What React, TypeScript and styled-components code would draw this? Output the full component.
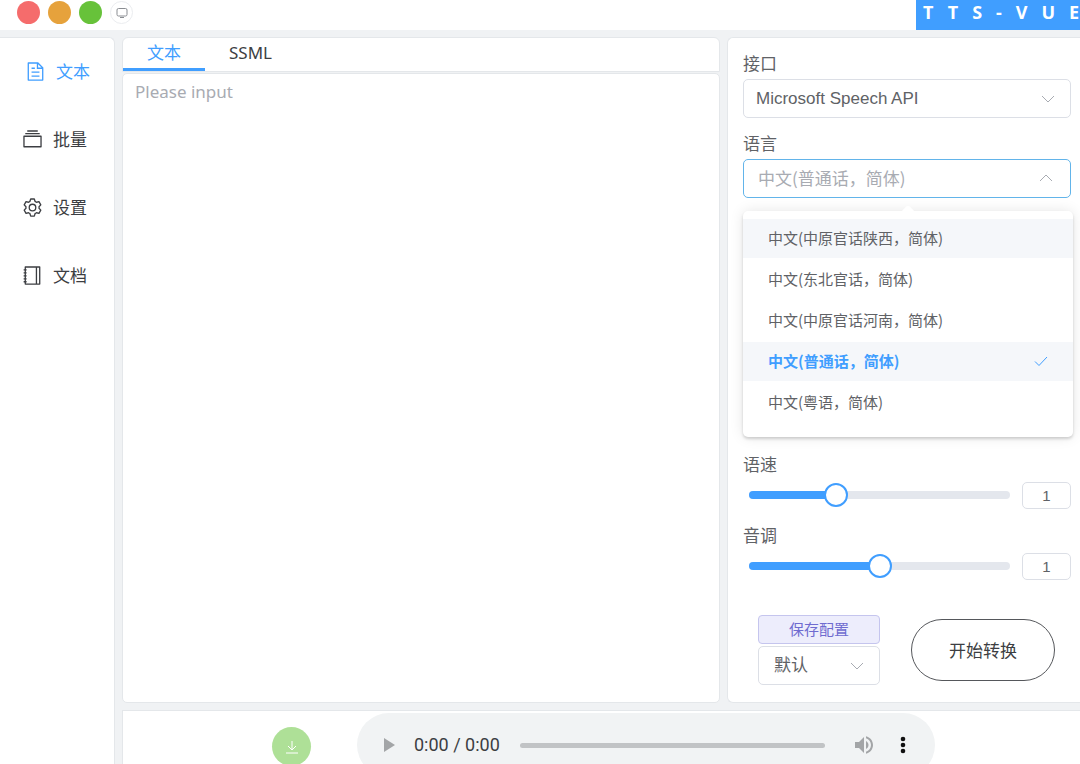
import React, { useState } from "react";
import styled, { createGlobalStyle, css } from "styled-components";

const sans = `"Noto Sans", "Noto Sans CJK SC", sans-serif`;
const cjk = `"Noto Sans CJK SC", sans-serif`;
const arial = `"Liberation Sans", "Noto Sans CJK SC", sans-serif`;

const color = {
  primary: "#409eff",
  text: "#3c3e42",
  regular: "#606266",
  placeholder: "#a8abb2",
  border: "#dcdfe6",
  focus: "#62b4ea",
  panelBorder: "#e4e7ea",
  page: "#f0f2f4",
};

const GlobalStyle = createGlobalStyle`
  *, *::before, *::after { box-sizing: border-box; }
  body { margin: 0; background: ${color.page}; overflow: hidden; }
  button, input, select, textarea { font: inherit; color: inherit; margin: 0; }
  button { cursor: pointer; }
`;

const Shell = styled.div`
  display: flex;
  flex-direction: column;
  height: 100vh;
  font-family: ${cjk};
  font-size: 17px;
  line-height: 24px;
  color: ${color.text};
`;

const Header = styled.header`
  display: flex;
  justify-content: space-between;
  flex: 0 0 30px;
  background: #fff;
`;

const WindowButtons = styled.div`
  display: flex;
  gap: 8px;
  padding-left: 17px;
`;

const WindowButton = styled.button<{ $fill: string; $outlined?: boolean }>`
  display: flex;
  align-items: center;
  justify-content: center;
  width: 23px;
  height: 23px;
  margin-top: 1px;
  padding: 0;
  border: ${(p) => (p.$outlined ? "1px solid #ebedf0" : "0")};
  border-radius: 50%;
  background: ${(p) => p.$fill};
  color: #8a8d92;
`;

const Brand = styled.div`
  flex: 0 0 164px;
  width: 164px;
  padding-left: 7px;
  background: ${color.primary};
  color: #fff;
  font-family: ${sans};
  font-size: 18px;
  font-weight: 700;
  letter-spacing: 14px;
  white-space: nowrap;
`;

const Body = styled.div`
  display: flex;
  flex: 1;
  gap: 7px;
  min-height: 0;
  padding-top: 7px;
`;

const Sidebar = styled.nav`
  flex: 0 0 115px;
  background: #fff;
  border: 1px solid ${color.panelBorder};
  border-width: 1px 1px 0 0;
  border-radius: 0 6px 0 0;
`;

const NavItem = styled.a<{ $active?: boolean }>`
  display: flex;
  align-items: center;
  gap: 10px;
  height: 68px;
  padding-bottom: 2px;
  padding-left: ${(p) => (p.$active ? 25 : 22)}px;
  color: ${(p) => (p.$active ? color.primary : color.text)};
  text-decoration: none;
`;

const Content = styled.div`
  display: flex;
  flex: 1;
  flex-direction: column;
  gap: 7px;
  min-width: 0;
`;

const Workspace = styled.main`
  display: flex;
  flex: 1;
  gap: 7px;
  min-height: 0;
`;

const Editor = styled.section`
  display: flex;
  flex: 1;
  flex-direction: column;
  gap: 1px;
  min-width: 0;
`;

const Tabs = styled.div`
  display: flex;
  flex: 0 0 35px;
  background: #fff;
  border: 1px solid ${color.panelBorder};
  border-radius: 6px 6px 0 0;
`;

const Tab = styled.button<{ $active?: boolean }>`
  padding: 0 24px;
  border: 0;
  border-bottom: 3px solid ${(p) => (p.$active ? color.primary : "transparent")};
  background: none;
  color: ${(p) => (p.$active ? color.primary : color.text)};
  font-family: ${sans};
`;

const TextBox = styled.textarea`
  flex: 1;
  width: 100%;
  padding: 6px 12px;
  border: 1px solid ${color.panelBorder};
  border-radius: 5px;
  background: #fff;
  font-family: ${sans};
  resize: none;
  outline: none;
  &::placeholder { color: ${color.placeholder}; }
`;

const Options = styled.aside`
  flex: 0 0 353px;
  padding: 13px 9px 0 15px;
  background: #fff;
  border: 1px solid ${color.panelBorder};
  border-right: 0;
  border-radius: 6px 0 0 6px;
`;

const Field = styled.div<{ $below?: number }>`
  display: flex;
  flex-direction: column;
  gap: 4px;
  position: relative;
  margin-bottom: ${(p) => p.$below ?? 13}px;
`;

const Label = styled.label`
  align-self: flex-start;
  color: ${color.regular};
`;

const boxStyle = css`
  width: 100%;
  height: 39px;
  border: 1px solid ${color.border};
  border-radius: 5px;
  background: #fff;
  color: ${color.regular};
`;

const SelectWrap = styled.div`
  display: grid;
  align-items: center;
  & > * { grid-area: 1 / 1; }
  & > svg {
    justify-self: end;
    margin-right: 16px;
    pointer-events: none;
  }
`;

const Select = styled.select<{ $inset?: number }>`
  ${boxStyle}
  appearance: none;
  padding: 0 ${(p) => p.$inset ?? 12}px;
  font-family: ${arial};
`;

const Combo = styled.button`
  ${boxStyle}
  display: flex;
  align-items: center;
  justify-content: space-between;
  padding: 0 17px 2px 14px;
  border: 1px solid ${color.focus};
  color: ${color.placeholder};
`;

const Menu = styled.ul`
  position: absolute;
  z-index: 2;
  top: calc(100% + 13px);
  left: 0;
  right: -2px;
  height: 226px;
  margin: 0;
  padding: 8px 0;
  list-style: none;
  background: #fff;
  border-radius: 5px;
  box-shadow: 0 2px 3px rgba(0, 0, 0, 0.16), 0 0 14px rgba(0, 0, 0, 0.1);
  &::before {
    content: "";
    position: absolute;
    top: -4px;
    left: 50%;
    width: 10px;
    height: 10px;
    margin-left: -5px;
    background: #fff;
    border-radius: 2px;
    transform: rotate(45deg);
  }
`;

const MenuItem = styled.li<{ $shaded?: boolean; $selected?: boolean }>`
  display: flex;
  align-items: center;
  justify-content: space-between;
  position: relative;
  height: 39px;
  margin-bottom: 2px;
  padding: 0 25px 2px;
  background: ${(p) => (p.$shaded ? "#f5f7fa" : "#fff")};
  color: ${(p) => (p.$selected ? color.primary : color.regular)};
  font-size: 15px;
  font-weight: ${(p) => (p.$selected ? 700 : 400)};
  cursor: pointer;
`;

const SliderRow = styled.div`
  display: flex;
  align-items: center;
  gap: 12px;
  height: 30px;
  padding-left: 6px;
`;

const Slider = styled.div`
  display: grid;
  flex: 1;
  align-items: center;
  & > * { grid-area: 1 / 1; }
`;

const Rail = styled.div`
  height: 8px;
  border-radius: 4px;
  background: #e4e7ed;
`;

const Fill = styled.div`
  height: 100%;
  border-radius: 4px;
  background: ${color.primary};
`;

const Range = styled.input`
  appearance: none;
  height: 24px;
  margin: 0 -12px;
  background: transparent;
  &::-webkit-slider-thumb {
    appearance: none;
    width: 24px;
    height: 24px;
    border: 2px solid ${color.primary};
    border-radius: 50%;
    background: #fff;
  }
`;

const NumberBox = styled.input`
  width: 49px;
  height: 27px;
  border: 1px solid ${color.border};
  border-radius: 5px;
  color: ${color.regular};
  font-family: ${arial};
  font-size: 15px;
  text-align: center;
`;

const Actions = styled.div`
  display: flex;
  align-items: center;
  gap: 31px;
  padding: 21px 0 0 15px;
`;

const Config = styled.div`
  display: flex;
  flex: 0 0 122px;
  flex-direction: column;
  gap: 2px;
`;

const SaveButton = styled.button`
  height: 29px;
  padding: 0 0 2px;
  border: 1px solid #c5c5ee;
  border-radius: 4px;
  background: #ededfc;
  color: #6f6bd0;
  font-size: 15px;
`;

const StartButton = styled.button`
  width: 144px;
  height: 62px;
  border: 1px solid #55575b;
  border-radius: 31px;
  background: #fff;
`;

const Footer = styled.footer`
  display: flex;
  align-items: flex-start;
  justify-content: center;
  gap: 46px;
  flex: 0 0 54px;
  padding: 2px 0 0 4px;
  overflow: hidden;
  background: #fff;
  border: 1px solid ${color.panelBorder};
  border-width: 1px 0 0 1px;
`;

const Download = styled.button`
  display: flex;
  align-items: center;
  justify-content: center;
  flex: 0 0 39px;
  height: 39px;
  margin-top: 14px;
  padding: 0;
  border: 0;
  border-radius: 50%;
  background: #aee097;
  color: #fff;
`;

const Player = styled.div`
  display: flex;
  align-items: center;
  flex: 0 1 578px;
  height: 64px;
  padding: 0 20px;
  border-radius: 32px;
  background: #f1f3f4;
  font-family: Roboto, sans-serif;
`;

const PlayerButton = styled.button<{ $tone: string }>`
  display: flex;
  align-items: center;
  justify-content: center;
  width: 24px;
  height: 24px;
  padding: 0;
  border: 0;
  background: none;
  color: ${(p) => p.$tone};
`;

const Time = styled.span`
  margin: 0 20px 0 13px;
  font-size: 18px;
`;

const Progress = styled.div`
  flex: 1;
  height: 5px;
  margin-right: 27px;
  border-radius: 3px;
  background: #c1c3c5;
`;

const Volume = styled(PlayerButton)`
  margin-right: 15px;
`;

const navIcons = {
  document:
    "M832 384H576V128H192v768h640V384zm-26.496-64L640 154.496V320h165.504zM160 64h480l256 256v608a32 32 0 0 1-32 32H160a32 32 0 0 1-32-32V96a32 32 0 0 1 32-32zm160 448h384v64H320v-64zm0-192h160v64H320v-64zm0 384h384v64H320v-64z",
  files:
    "M128 384v448h768V384H128zm-32-64h832a32 32 0 0 1 32 32v512a32 32 0 0 1-32 32H96a32 32 0 0 1-32-32V352a32 32 0 0 1 32-32zm64-128h704v64H160zm96-128h512v64H256z",
  setting:
    "M600.704 64a32 32 0 0 1 30.464 22.208l35.2 109.376c14.784 7.232 28.928 15.36 42.432 24.512l112.384-24.192a32 32 0 0 1 34.432 15.36L944.32 364.8a32 32 0 0 1-4.032 37.504l-77.12 85.12a357.12 357.12 0 0 1 0 49.024l77.12 85.248a32 32 0 0 1 4.032 37.504l-88.704 153.6a32 32 0 0 1-34.432 15.296L708.8 803.904c-13.44 9.088-27.648 17.28-42.368 24.512l-35.264 109.376A32 32 0 0 1 600.704 960H423.296a32 32 0 0 1-30.464-22.208L357.696 828.48a351.616 351.616 0 0 1-42.56-24.64l-112.32 24.256a32 32 0 0 1-34.432-15.36L79.68 659.2a32 32 0 0 1 4.032-37.504l77.12-85.248a357.12 357.12 0 0 1 0-48.896l-77.12-85.248A32 32 0 0 1 79.68 364.8l88.704-153.6a32 32 0 0 1 34.432-15.296l112.32 24.256c13.568-9.152 27.776-17.408 42.56-24.64l35.2-109.312A32 32 0 0 1 423.232 64H600.64zm-23.424 64H446.72l-36.352 113.088-24.512 11.968a294.113 294.113 0 0 0-34.816 20.096l-22.656 15.36-116.224-25.088-65.28 113.152 79.68 88.192-1.92 27.136a293.12 293.12 0 0 0 0 40.192l1.92 27.136-79.808 88.192 65.344 113.152 116.224-25.024 22.656 15.296a294.113 294.113 0 0 0 34.816 20.096l24.512 11.968L446.72 896h130.688l36.48-113.152 24.448-11.904a288.282 288.282 0 0 0 34.752-20.096l22.592-15.296 116.288 25.024 65.28-113.152-79.744-88.192 1.92-27.136a293.12 293.12 0 0 0 0-40.256l-1.92-27.136 79.808-88.128-65.344-113.152-116.288 24.96-22.592-15.232a287.616 287.616 0 0 0-34.752-20.096l-24.448-11.904L577.344 128zM512 320a192 192 0 1 1 0 384 192 192 0 0 1 0-384zm0 64a128 128 0 1 0 0 256 128 128 0 0 0 0-256z",
  notebook:
    "M192 128v768h640V128H192zm-32-64h704a32 32 0 0 1 32 32v832a32 32 0 0 1-32 32H160a32 32 0 0 1-32-32V96a32 32 0 0 1 32-32zM672 128h64v768h-64zM80 208h144v64H80zM80 352h144v64H80zM80 496h144v64H80zM80 640h144v64H80zM80 784h144v64H80z",
};

const NavIcon = ({ d }: { d: string }) => (
  <svg width="21" height="21" viewBox="0 0 1024 1024" fill="currentColor" aria-hidden="true">
    <path d={d} />
  </svg>
);

const Chevron = ({ up }: { up?: boolean }) => (
  <svg width="14" height="14" viewBox="0 0 14 14" fill="none" stroke="#a8abb2" aria-hidden="true">
    <path d={up ? "M1 10l6-6 6 6" : "M1 4l6 6 6-6"} />
  </svg>
);

const navItems: { label: string; icon: keyof typeof navIcons }[] = [
  { label: "文本", icon: "document" },
  { label: "批量", icon: "files" },
  { label: "设置", icon: "setting" },
  { label: "文档", icon: "notebook" },
];

const languages = [
  "中文(中原官话陕西，简体)",
  "中文(东北官话，简体)",
  "中文(中原官话河南，简体)",
  "中文(普通话，简体)",
  "中文(粤语，简体)",
];

function SliderField({ id, label, max }: { id: string; label: string; max: number }) {
  const [value, setValue] = useState(1);
  return (
    <Field>
      <Label htmlFor={id}>{label}</Label>
      <SliderRow>
        <Slider>
          <Rail>
            <Fill style={{ width: `${(value / max) * 100}%` }} />
          </Rail>
          <Range
            id={id}
            type="range"
            min={0}
            max={max}
            step={0.01}
            value={value}
            onChange={(e) => setValue(Number(e.target.value))}
          />
        </Slider>
        <NumberBox
          aria-label={label}
          inputMode="decimal"
          value={value}
          onChange={(e) => setValue(Math.min(max, Number(e.target.value) || 0))}
        />
      </SliderRow>
    </Field>
  );
}

export default function App() {
  const [open, setOpen] = useState(true);
  const [language, setLanguage] = useState(languages[3]);

  return (
    <Shell>
      <GlobalStyle />
      <Header>
        <WindowButtons>
          <WindowButton $fill="#f56c6c" />
          <WindowButton $fill="#e6a23c" />
          <WindowButton $fill="#67c23a" />
          <WindowButton $fill="#fff" $outlined>
            <svg width="12" height="12" viewBox="0 0 12 12" fill="none" stroke="currentColor" aria-hidden="true">
              <rect x="1" y="1.5" width="10" height="7.5" rx="1.5" />
              <path d="M4 10.500h4" />
            </svg>
          </WindowButton>
        </WindowButtons>
        <Brand>TTS-VUE</Brand>
      </Header>
      <Body>
        <Sidebar>
          {navItems.map((item, i) => (
            <NavItem key={item.label} href={`#${item.icon}`} $active={i === 0}>
              <NavIcon d={navIcons[item.icon]} />
              {item.label}
            </NavItem>
          ))}
        </Sidebar>
        <Content>
          <Workspace>
            <Editor>
              <Tabs role="tablist">
                <Tab role="tab" aria-selected $active>文本</Tab>
                <Tab role="tab" aria-selected={false}>SSML</Tab>
              </Tabs>
              <TextBox placeholder="Please input" />
            </Editor>
            <Options>
              <Field>
                <Label htmlFor="api">接口</Label>
                <SelectWrap>
                  <Select id="api">
                    <option>Microsoft Speech API</option>
                  </Select>
                  <Chevron />
                </SelectWrap>
              </Field>
              <Field $below={254}>
                <Label htmlFor="language">语言</Label>
                <Combo
                  id="language"
                  type="button"
                  aria-haspopup="listbox"
                  aria-expanded={open}
                  onClick={() => setOpen(!open)}
                >
                  {language}
                  <Chevron up={open} />
                </Combo>
                {open && (
                  <Menu role="listbox">
                    {languages.map((name, i) => (
                      <MenuItem
                        key={name}
                        role="option"
                        aria-selected={name === language}
                        $selected={name === language}
                        $shaded={i === 0 || name === language}
                        onClick={() => {
                          setLanguage(name);
                          setOpen(false);
                        }}
                      >
                        {name}
                        {name === language && (
                          <svg width="14" height="14" viewBox="0 0 14 14" fill="none" stroke="#409eff" aria-hidden="true">
                            <path d="M1 7.5l4 4 8-8.5" />
                          </svg>
                        )}
                      </MenuItem>
                    ))}
                  </Menu>
                )}
              </Field>
              <SliderField id="speed" label="语速" max={3} />
              <SliderField id="pitch" label="音调" max={2} />
              <Actions>
                <Config>
                  <SaveButton>保存配置</SaveButton>
                  <SelectWrap>
                    <Select aria-label="保存配置" $inset={15}>
                      <option>默认</option>
                    </Select>
                    <Chevron />
                  </SelectWrap>
                </Config>
                <StartButton>开始转换</StartButton>
              </Actions>
            </Options>
          </Workspace>
          <Footer>
            <Download>
              <svg width="14" height="14" viewBox="0 0 14 14" fill="none" stroke="currentColor" aria-hidden="true">
                <path d="M7 1v9M3 6l4 4 4-4M1 13h12" />
              </svg>
            </Download>
            <Player>
              <PlayerButton $tone="#a3a5a7">
                <svg width="12" height="14" viewBox="0 0 12 14" fill="currentColor" aria-hidden="true">
                  <path d="M1 0v14l11-7z" />
                </svg>
              </PlayerButton>
              <Time>0:00 / 0:00</Time>
              <Progress />
              <Volume $tone="#a3a5a7">
                <svg width="24" height="24" viewBox="0 0 24 24" fill="currentColor" aria-hidden="true">
                  <path d="M3 9v6h4l5 5V4L7 9H3zm13.5 3c0-1.77-1.02-3.29-2.5-4.03v8.05c1.48-.73 2.5-2.25 2.5-4.02zM14 3.23v2.06c2.89.86 5 3.54 5 6.71s-2.11 5.85-5 6.71v2.06c4.01-.91 7-4.49 7-8.77s-2.99-7.86-7-8.77z" />
                </svg>
              </Volume>
              <PlayerButton $tone="#111">
                <svg width="24" height="24" viewBox="0 0 24 24" fill="currentColor" aria-hidden="true">
                  <circle cx="12" cy="6" r="2.3" />
                  <circle cx="12" cy="12" r="2.3" />
                  <circle cx="12" cy="18" r="2.3" />
                </svg>
              </PlayerButton>
            </Player>
          </Footer>
        </Content>
      </Body>
    </Shell>
  );
}
